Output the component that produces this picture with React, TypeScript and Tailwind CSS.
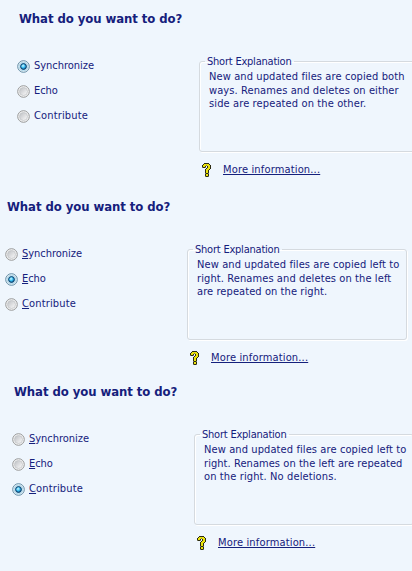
import { clsx } from 'clsx';

type Mode = 'Synchronize' | 'Echo' | 'Contribute';

interface Line {
  text: string;
  tracking: string;
}

interface PanelProps {
  className: string;
  selected: Mode;
  mnemonics?: boolean;
  lines: Line[];
}

const MODES: { name: Mode; tracking: string }[] = [
  { name: 'Synchronize', tracking: 'tracking-[-0.02px]' },
  { name: 'Echo', tracking: 'tracking-[-0.1px]' },
  { name: 'Contribute', tracking: 'tracking-[0.15px]' },
];

// k = outline, y = fill, g = shade
const HELP_PIXELS = [
  '..kkkkk..',
  '.kyyyyyk.',
  'kyyygyyyk',
  'kyyk.kyyk',
  'gkkg.kyyk',
  '....kyyyk',
  '...kyyyk.',
  '...kyyk..',
  '...kyyk..',
  '...kyyk..',
  '...gkkg..',
  '...kyyk..',
  '...kyyk..',
  '...gkkg..',
];

const HELP_COLORS: Record<string, string> = { k: '#2c2b12', y: '#ebe30c', g: '#77785a' };

function RadioDot({ checked }: { checked: boolean }) {
  return (
    <svg width="13" height="13" viewBox="0 0 13 13" className="block shrink-0">
      <defs>
        <linearGradient id="radio-off" x1="0" y1="0" x2="1" y2="1">
          <stop offset="0.1" stopColor="#c2c4c8" />
          <stop offset="0.9" stopColor="#f6f6f6" />
        </linearGradient>
        <radialGradient id="radio-on" cx="0.42" cy="0.38" r="0.62">
          <stop offset="0" stopColor="#d4f8ff" />
          <stop offset="0.5" stopColor="#3fc2f4" />
          <stop offset="1" stopColor="#0b6aa4" />
        </radialGradient>
      </defs>
      <circle cx="6.5" cy="6.5" r="5.8" fill="#f4f4f4" stroke={checked ? '#5f8ba5' : '#979898'} />
      {checked ? (
        <>
          <circle cx="6.5" cy="6.5" r="4.4" fill="#cdeaf8" stroke="#acd6ea" />
          <circle cx="6.5" cy="6.5" r="2.9" fill="url(#radio-on)" stroke="#0c3b66" />
        </>
      ) : (
        <circle cx="6.5" cy="6.5" r="4" fill="url(#radio-off)" stroke="#c3c5c8" strokeWidth="0.8" />
      )}
    </svg>
  );
}

function HelpIcon() {
  return (
    <svg width="9" height="14" viewBox="0 0 9 14" shapeRendering="crispEdges" className="block shrink-0">
      {HELP_PIXELS.map((row, y) =>
        row.split('').map((key, x) =>
          key === '.' ? null : <rect key={`${x}-${y}`} x={x} y={y} width="1" height="1" fill={HELP_COLORS[key]} />
        )
      )}
    </svg>
  );
}

function ModeOption({ name, tracking, checked, mnemonics }: { name: Mode; tracking: string; checked: boolean; mnemonics: boolean }) {
  return (
    <label className="flex h-[13px] items-start gap-1">
      <RadioDot checked={checked} />
      <span className={clsx('leading-[11px] whitespace-nowrap', tracking)}>
        <span className={clsx(mnemonics && 'underline underline-offset-1')}>{name[0]}</span>
        {name.slice(1)}
      </span>
    </label>
  );
}

function Panel({ className, selected, mnemonics = false, lines }: PanelProps) {
  return (
    <section className={className}>
      <h2 className="pl-[2px] text-[13px] leading-4 font-bold tracking-[-0.07px] whitespace-nowrap">
        What do you want to do?
      </h2>
      <div className="mt-[28px] flex">
        <div className="flex w-[182px] shrink-0 flex-col gap-3 pt-[5px]">
          {MODES.map((mode) => (
            <ModeOption key={mode.name} {...mode} checked={mode.name === selected} mnemonics={mnemonics} />
          ))}
        </div>
        <div className="w-[220px] shrink-0">
          <fieldset className="h-[97px] w-[220px] min-w-0 rounded-[3px] border border-[#d5dadf] px-[9px] shadow-[inset_1px_1px_0_#fff,1px_1px_0_#fff]">
            <legend className="-ml-[4px] h-[13px] pr-[3px] pl-[2px] leading-[13px] tracking-[-0.22px] whitespace-nowrap">
              Short Explanation
            </legend>
            <div className="pt-[2px]">
              {lines.map((line) => (
                <p key={line.text} className={clsx('h-[13.5px] leading-[13.5px] whitespace-nowrap', line.tracking)}>
                  {line.text}
                </p>
              ))}
            </div>
          </fieldset>
          <div className="mt-[11px] flex items-center gap-[12px] pl-[3px]">
            <HelpIcon />
            <a href="#" className="leading-[14px] tracking-[0.16px] whitespace-nowrap underline underline-offset-1">
              More information...
            </a>
          </div>
        </div>
      </div>
    </section>
  );
}

export default function App() {
  return (
    <main className="h-[571px] w-[412px] overflow-hidden bg-[#eff6fd] font-['DejaVu_Sans_Condensed','DejaVu_Sans',sans-serif] text-[11px] text-[#15207c]">
      <Panel
        className="h-[188px] pt-[11px] pl-[17px]"
        selected="Synchronize"
        lines={[
          { text: 'New and updated files are copied both', tracking: 'tracking-[0.1px]' },
          { text: 'ways. Renames and deletes on either', tracking: 'tracking-[0.1px]' },
          { text: 'side are repeated on the other.', tracking: 'tracking-[0.12px]' },
        ]}
      />
      <Panel
        className="h-[185px] pt-[11px] pl-[5px]"
        selected="Echo"
        mnemonics
        lines={[
          { text: 'New and updated files are copied left to', tracking: 'tracking-[0.1px]' },
          { text: 'right. Renames and deletes on the left', tracking: 'tracking-[0.1px]' },
          { text: 'are repeated on the right.', tracking: 'tracking-[0.08px]' },
        ]}
      />
      <Panel
        className="h-[198px] pt-[11px] pl-[12px]"
        selected="Contribute"
        mnemonics
        lines={[
          { text: 'New and updated files are copied left to', tracking: 'tracking-[0.1px]' },
          { text: 'right. Renames on the left are repeated', tracking: 'tracking-[0.06px]' },
          { text: 'on the right. No deletions.', tracking: 'tracking-[0.12px]' },
        ]}
      />
    </main>
  );
}
